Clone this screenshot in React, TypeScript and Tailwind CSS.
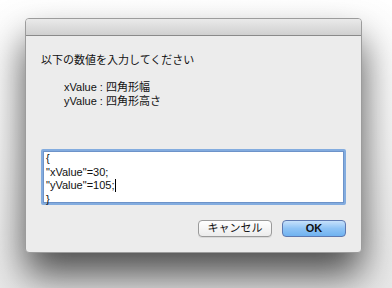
import React from 'react';

const font = { fontFamily: '"Liberation Sans", "Noto Sans CJK JP", sans-serif' };

const App: React.FC = () => {
    return (
        <div
            className="w-[392px] h-[288px] bg-gradient-to-b from-white via-[#f6f6f6] to-[#e9e9e9] pt-[18px] pl-[25px] overflow-hidden"
            style={font}
        >
            <div className="w-[337px] h-[235px] flex flex-col rounded-[4px] bg-[#ececec] border border-[#9c9c9c] shadow-[0_22px_38px_rgba(0,0,0,0.68)] overflow-hidden">
                <div className="h-[17px] flex-shrink-0 bg-gradient-to-b from-[#eaeaea] to-[#d0d0d0] border-b border-[#8a8a8a]" />

                <div className="flex-1 flex flex-col px-[15px] text-[11px] text-[#111]">
                    <p className="mt-[17px] leading-[14px]">以下の数値を入力してください</p>
                    <div className="mt-[13px] pl-[23px] leading-[14px]">
                        <p>xValue : 四角形幅</p>
                        <p>yValue : 四角形高さ</p>
                    </div>

                    <div className="mt-[41px] h-[56px] rounded-[2px] border-2 border-[#83acdf] bg-white px-[3px] pt-[1px] leading-[13.5px] shadow-[inset_0_0_0_1px_#6d93c9]">
                        <p>{'{'}</p>
                        <p>"xValue"=30;</p>
                        <p className="flex items-center">
                            "yValue"=105;<span className="inline-block w-px h-[13px] bg-black ml-px" />
                        </p>
                        <p>{'}'}</p>
                    </div>

                    <div className="mt-[15px] flex justify-end gap-[10px]">
                        <button className="w-[74px] h-[17px] rounded-[4px] border border-[#9a9a9a] bg-gradient-to-b from-white to-[#ececec] text-[11px] text-[#111] leading-[15px] shadow-[0_1px_0_rgba(0,0,0,0.08)]">
                            キャンセル
                        </button>
                        <button className="w-[64px] h-[17px] rounded-[4px] border border-[#5d78b0] bg-gradient-to-b from-[#c6e1fb] via-[#8ec3f5] to-[#6fb2f0] text-[11px] font-bold text-[#111] leading-[15px]">
                            OK
                        </button>
                    </div>
                </div>
            </div>
        </div>
    );
};

export default App;
